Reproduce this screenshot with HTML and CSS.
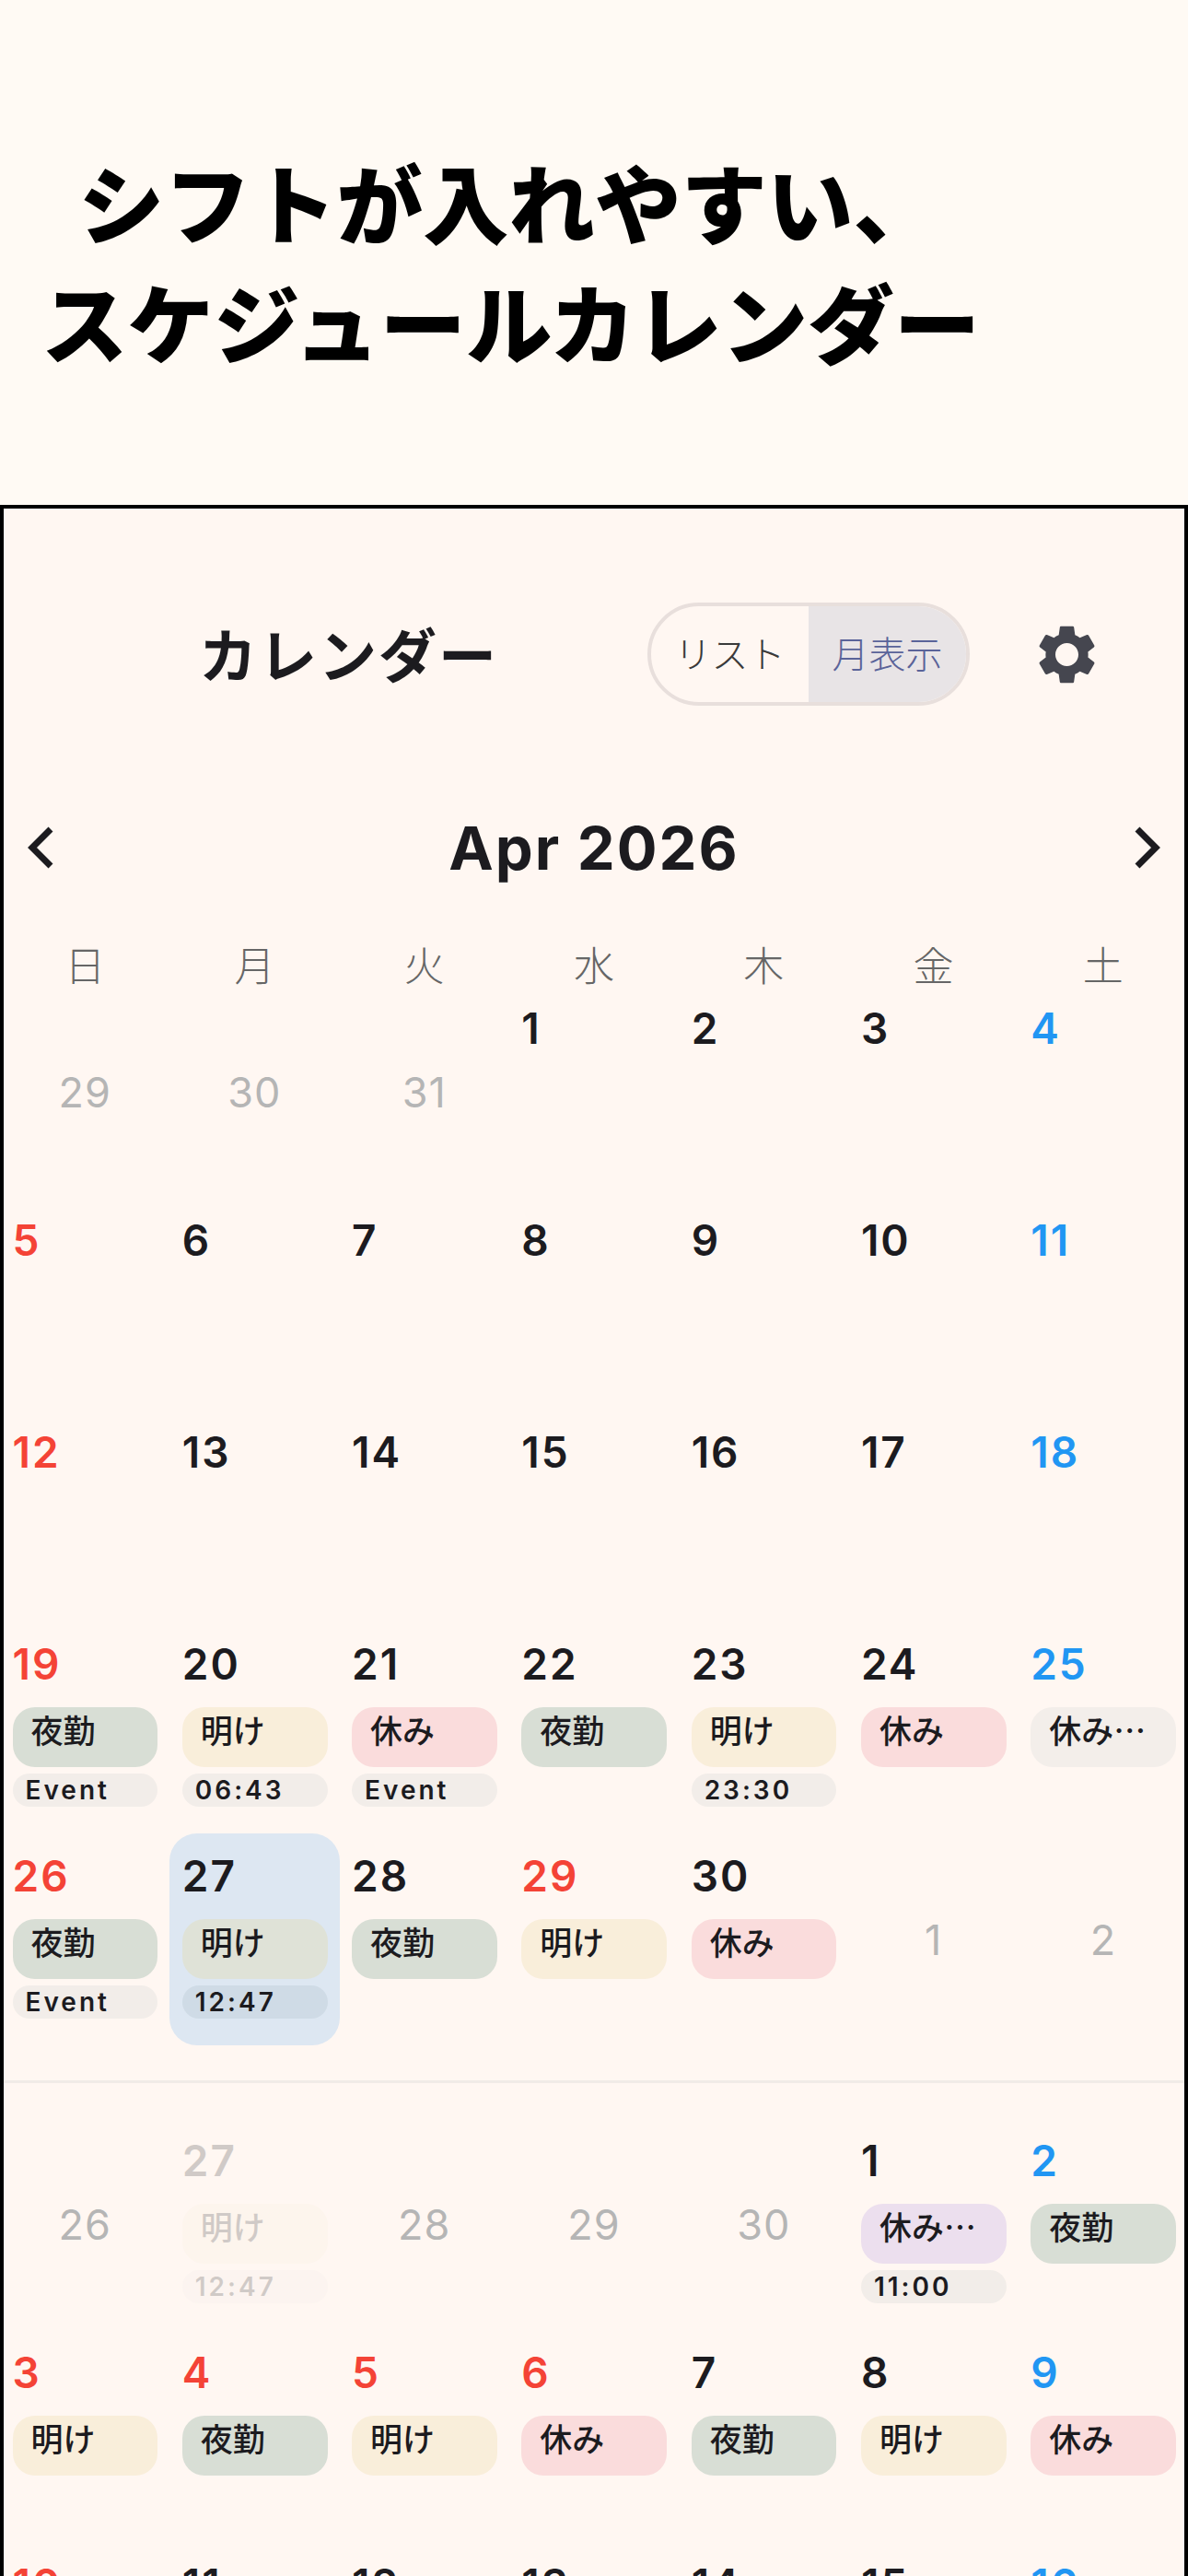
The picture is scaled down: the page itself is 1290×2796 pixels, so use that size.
FILE: index.html
```html
<!DOCTYPE html>
<html lang="ja">
<head>
    <meta charset="UTF-8">
    <meta name="viewport" content="width=device-width, initial-scale=1.0">
    <title>カレンダー</title>
    <link rel="stylesheet" href="styles.css">
</head>
<body>
    <div class="hero">
        <div class="hero-line first">シフトが入れやすい、</div>
        <div class="hero-line">スケジュールカレンダー</div>
    </div>

    <div class="frame">
        <div class="top-bar">
            <div class="page-title">カレンダー</div>
            <div class="view-toggle">
                <div class="toggle-item">リスト</div>
                <div class="toggle-item active">月表示</div>
            </div>
            <svg class="gear" viewBox="0 0 24 24"><path d="M19.14 12.94c.04-.3.06-.61.06-.94 0-.32-.02-.64-.07-.94l2.03-1.58a.49.49 0 0 0 .12-.61l-1.92-3.32a.488.488 0 0 0-.59-.22l-2.39.96c-.5-.38-1.03-.7-1.62-.94l-.36-2.54a.484.484 0 0 0-.48-.41h-3.84c-.24 0-.43.17-.47.41l-.36 2.54c-.59.24-1.13.57-1.62.94l-2.39-.96c-.22-.08-.47 0-.59.22L2.74 8.87c-.12.21-.08.47.12.61l2.03 1.58c-.05.3-.09.63-.09.94s.02.64.07.94l-2.03 1.58a.49.49 0 0 0-.12.61l1.92 3.32c.12.22.37.29.59.22l2.39-.96c.5.38 1.03.7 1.62.94l.36 2.54c.05.24.24.41.48.41h3.84c.24 0 .44-.17.47-.41l.36-2.54c.59-.24 1.13-.56 1.62-.94l2.39.96c.22.08.47 0 .59-.22l1.92-3.32c.12-.22.07-.47-.12-.61l-2.01-1.58zM12 15.9c-2.15 0-3.9-1.75-3.9-3.9s1.75-3.9 3.9-3.9 3.9 1.75 3.9 3.9-1.75 3.9-3.9 3.9z"/></svg>
        </div>

        <div class="month-nav">
            <svg class="chevron" viewBox="0 0 30 46"><path d="M26 3 L6 23 L26 43"/></svg>
            <div class="month-label">Apr 2026</div>
            <svg class="chevron" viewBox="0 0 30 46"><path d="M4 3 L24 23 L4 43"/></svg>
        </div>

        <div class="weekdays">
            <div>日</div><div>月</div><div>火</div><div>水</div><div>木</div><div>金</div><div>土</div>
        </div>

        <div class="month-grid">
            <div class="cell other">29</div>
            <div class="cell other">30</div>
            <div class="cell other">31</div>
            <div class="cell"><div class="date">1</div></div>
            <div class="cell"><div class="date">2</div></div>
            <div class="cell"><div class="date">3</div></div>
            <div class="cell"><div class="date sat">4</div></div>

            <div class="cell"><div class="date sun">5</div></div>
            <div class="cell"><div class="date">6</div></div>
            <div class="cell"><div class="date">7</div></div>
            <div class="cell"><div class="date">8</div></div>
            <div class="cell"><div class="date">9</div></div>
            <div class="cell"><div class="date">10</div></div>
            <div class="cell"><div class="date sat">11</div></div>

            <div class="cell"><div class="date sun">12</div></div>
            <div class="cell"><div class="date">13</div></div>
            <div class="cell"><div class="date">14</div></div>
            <div class="cell"><div class="date">15</div></div>
            <div class="cell"><div class="date">16</div></div>
            <div class="cell"><div class="date">17</div></div>
            <div class="cell"><div class="date sat">18</div></div>

            <div class="cell"><div class="date sun">19</div><div class="shift night">夜勤</div><div class="note">Event</div></div>
            <div class="cell"><div class="date">20</div><div class="shift after">明け</div><div class="note">06:43</div></div>
            <div class="cell"><div class="date">21</div><div class="shift off">休み</div><div class="note">Event</div></div>
            <div class="cell"><div class="date">22</div><div class="shift night">夜勤</div></div>
            <div class="cell"><div class="date">23</div><div class="shift after">明け</div><div class="note">23:30</div></div>
            <div class="cell"><div class="date">24</div><div class="shift off">休み</div></div>
            <div class="cell"><div class="date sat">25</div><div class="shift plain">休み希望</div></div>

            <div class="cell"><div class="date sun">26</div><div class="shift night">夜勤</div><div class="note">Event</div></div>
            <div class="cell today"><div class="date">27</div><div class="shift after">明け</div><div class="note">12:47</div></div>
            <div class="cell"><div class="date">28</div><div class="shift night">夜勤</div></div>
            <div class="cell"><div class="date sun">29</div><div class="shift after">明け</div></div>
            <div class="cell"><div class="date">30</div><div class="shift off">休み</div></div>
            <div class="cell other">1</div>
            <div class="cell other">2</div>
        </div>

        <div class="month-divider"></div>

        <div class="month-grid next">
            <div class="cell other">26</div>
            <div class="cell faded"><div class="date">27</div><div class="shift after">明け</div><div class="note">12:47</div></div>
            <div class="cell other">28</div>
            <div class="cell other">29</div>
            <div class="cell other">30</div>
            <div class="cell"><div class="date">1</div><div class="shift wish">休み希望</div><div class="note">11:00</div></div>
            <div class="cell"><div class="date sat">2</div><div class="shift night">夜勤</div></div>

            <div class="cell"><div class="date sun">3</div><div class="shift after">明け</div></div>
            <div class="cell"><div class="date sun">4</div><div class="shift night">夜勤</div></div>
            <div class="cell"><div class="date sun">5</div><div class="shift after">明け</div></div>
            <div class="cell"><div class="date sun">6</div><div class="shift off">休み</div></div>
            <div class="cell"><div class="date">7</div><div class="shift night">夜勤</div></div>
            <div class="cell"><div class="date">8</div><div class="shift after">明け</div></div>
            <div class="cell"><div class="date sat">9</div><div class="shift off">休み</div></div>

            <div class="cell"><div class="date sun">10</div></div>
            <div class="cell"><div class="date">11</div></div>
            <div class="cell"><div class="date">12</div></div>
            <div class="cell"><div class="date">13</div></div>
            <div class="cell"><div class="date">14</div></div>
            <div class="cell"><div class="date">15</div></div>
            <div class="cell"><div class="date sat">16</div></div>
        </div>
    </div>
</body>
</html>
```

FILE: styles.css
```css
html, body {
    margin: 0;
    height: 2796px;
    overflow: hidden;
}

body {
    background: #fffaf4;
    color: #1c1b1f;
    font-family: Inter, "Noto Sans CJK JP", sans-serif;
}

.hero {
    height: 548px;
    box-sizing: border-box;
    padding: 153px 0 0 45px;
}

.hero-line {
    height: 130px;
    line-height: 130px;
    font-family: "Noto Sans CJK JP", sans-serif;
    font-size: 93.5px;
    font-weight: 900;
    color: #000;
    white-space: nowrap;
}

.hero-line.first {
    padding-left: 40px;
}

.frame {
    height: 2244px;
    overflow: hidden;
    background: #fff7f2;
    border-top: 4px solid #000;
    box-shadow: inset 4px 0 0 #000, inset -4px 0 0 #000;
}

.top-bar {
    height: 316px;
    box-sizing: border-box;
    padding: 0 93px 0 216px;
    display: flex;
    align-items: center;
}

.page-title {
    margin: 0 auto 6px 0;
    font-family: "Noto Sans CJK JP", sans-serif;
    font-size: 63px;
    font-weight: 700;
    letter-spacing: 2px;
}

.view-toggle {
    width: 350px;
    height: 112px;
    box-sizing: border-box;
    border: 4px solid #e8dfdc;
    border-radius: 56px;
    overflow: hidden;
    display: flex;
}

.toggle-item {
    flex: 1;
    padding-bottom: 4px;
    display: flex;
    align-items: center;
    justify-content: center;
    font-family: "Noto Sans CJK JP", sans-serif;
    font-size: 40px;
    font-weight: 300;
    color: #3a3a3a;
}

.toggle-item.active {
    background: #e8e4e6;
    color: #5a6399;
}

.gear {
    width: 77px;
    height: 77px;
    margin-left: 67px;
    fill: #45464f;
}

.month-nav {
    height: 104px;
    box-sizing: border-box;
    padding: 0 26px;
    display: flex;
    align-items: center;
    justify-content: space-between;
}

.chevron {
    width: 36px;
    height: 46px;
    fill: none;
    stroke: #1c1b1f;
    stroke-width: 7;
}

.month-label {
    font-size: 65px;
    font-weight: 700;
    letter-spacing: 2px;
}

.weekdays {
    height: 98px;
    box-sizing: border-box;
    padding-top: 50px;
    display: grid;
    grid-template-columns: repeat(7, 1fr);
    font-family: "Noto Sans CJK JP", sans-serif;
    font-size: 44px;
    font-weight: 300;
    line-height: 48px;
    text-align: center;
    color: #666;
}

.month-grid {
    display: grid;
    grid-template-columns: repeat(7, 1fr);
    grid-auto-rows: 230px;
}

.month-divider {
    height: 3px;
    margin: 38px 4px;
    background: #f1ebe7;
}

.cell {
    min-width: 0;
    box-sizing: border-box;
    padding: 30px 13px 0 13.5px;
    border-radius: 30px;
}

.cell.other {
    padding: 0;
    display: flex;
    align-items: center;
    justify-content: center;
    font-size: 45px;
    letter-spacing: 1px;
    color: #b5b5b5;
}

.cell.today {
    background: #dde7f2;
}

.cell.today .shift.after {
    background: #dfe2d7;
}

.cell.today .note {
    background: #cfdbe6;
}

.cell.faded > * {
    opacity: 0.2;
}

.date {
    height: 33px;
    margin-bottom: 30px;
    font-size: 46px;
    font-weight: 600;
    letter-spacing: 2px;
    line-height: 33px;
}

.date.sun {
    color: #f44336;
}

.date.sat {
    color: #2196f3;
}

.shift {
    height: 65px;
    box-sizing: border-box;
    padding: 0 8px 0 20px;
    border-radius: 24px;
    font-family: "Noto Sans CJK JP", sans-serif;
    font-size: 35px;
    font-weight: 500;
    line-height: 48px;
    white-space: nowrap;
    overflow: hidden;
    text-overflow: ellipsis;
}

.shift.night {
    background: #d8ded5;
}

.shift.after {
    background: #f9eeda;
}

.shift.off {
    background: #fadcdc;
}

.shift.plain {
    background: #f3eeea;
}

.shift.wish {
    background: #ecdfee;
}

.note {
    height: 36px;
    margin-top: 7px;
    padding-left: 14px;
    border-radius: 18px;
    background: #f2ede9;
    font-size: 28px;
    font-weight: 600;
    letter-spacing: 3px;
    line-height: 36px;
}
```
